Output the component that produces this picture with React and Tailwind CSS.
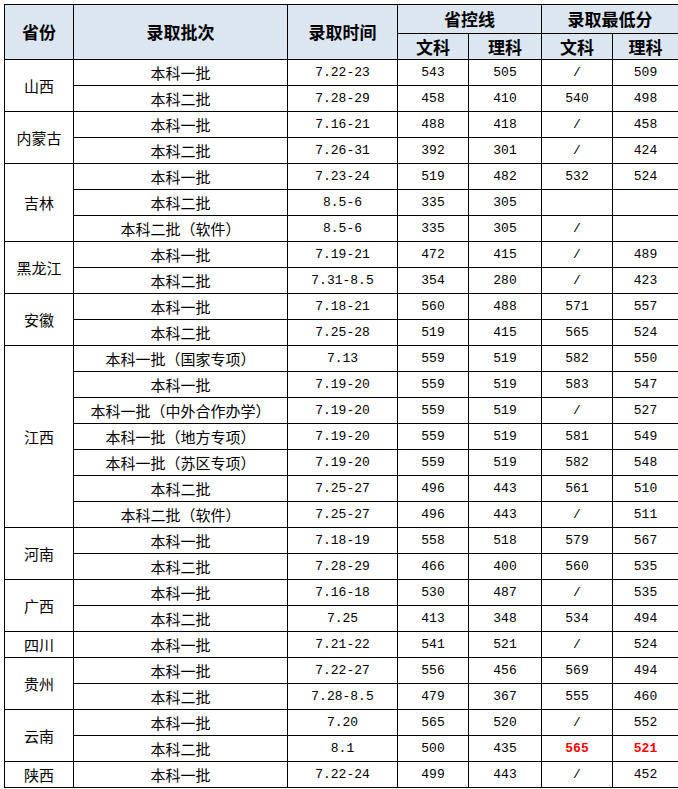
import React from 'react';

const groups = [
    { prov: '山西', rows: [['本科一批', '7.22-23', '543', '505', '/', '509'], ['本科二批', '7.28-29', '458', '410', '540', '498']] },
    { prov: '内蒙古', rows: [['本科一批', '7.16-21', '488', '418', '/', '458'], ['本科二批', '7.26-31', '392', '301', '/', '424']] },
    { prov: '吉林', rows: [['本科一批', '7.23-24', '519', '482', '532', '524'], ['本科二批', '8.5-6', '335', '305', '', ''], ['本科二批（软件）', '8.5-6', '335', '305', '/', '']] },
    { prov: '黑龙江', rows: [['本科一批', '7.19-21', '472', '415', '/', '489'], ['本科二批', '7.31-8.5', '354', '280', '/', '423']] },
    { prov: '安徽', rows: [['本科一批', '7.18-21', '560', '488', '571', '557'], ['本科二批', '7.25-28', '519', '415', '565', '524']] },
    {
        prov: '江西', rows: [
            ['本科一批（国家专项）', '7.13', '559', '519', '582', '550'],
            ['本科一批', '7.19-20', '559', '519', '583', '547'],
            ['本科一批（中外合作办学）', '7.19-20', '559', '519', '/', '527'],
            ['本科一批（地方专项）', '7.19-20', '559', '519', '581', '549'],
            ['本科一批（苏区专项）', '7.19-20', '559', '519', '582', '548'],
            ['本科二批', '7.25-27', '496', '443', '561', '510'],
            ['本科二批（软件）', '7.25-27', '496', '443', '/', '511'],
        ]
    },
    { prov: '河南', rows: [['本科一批', '7.18-19', '558', '518', '579', '567'], ['本科二批', '7.28-29', '466', '400', '560', '535']] },
    { prov: '广西', rows: [['本科一批', '7.16-18', '530', '487', '/', '535'], ['本科二批', '7.25', '413', '348', '534', '494']] },
    { prov: '四川', rows: [['本科一批', '7.21-22', '541', '521', '/', '524']] },
    { prov: '贵州', rows: [['本科一批', '7.22-27', '556', '456', '569', '494'], ['本科二批', '7.28-8.5', '479', '367', '555', '460']] },
    { prov: '云南', rows: [['本科一批', '7.20', '565', '520', '/', '552'], ['本科二批', '8.1', '500', '435', '565', '521', true]] },
    { prov: '陕西', rows: [['本科一批', '7.22-24', '499', '443', '/', '452']] },
];

const cn = { fontFamily: '"Noto Sans CJK SC", "Noto Sans", sans-serif' };
const num = { fontFamily: '"Liberation Mono", "Noto Sans CJK SC", monospace' };

const th = "border border-black bg-[#dce6f1] font-bold text-[17px] leading-[20px] text-center p-0";
const td = "border border-black text-center p-0 h-[26px] leading-[20px]";

export default function App() {
    return (
        <div className="bg-white w-[678px] h-[789px] overflow-hidden pt-[4px] pl-[4px] text-black">
            <table className="border-collapse table-fixed w-[674px]" style={cn}>
                <colgroup>
                    <col className="w-[69px]" />
                    <col className="w-[214px]" />
                    <col className="w-[110px]" />
                    <col className="w-[71px]" />
                    <col className="w-[73px]" />
                    <col className="w-[71px]" />
                    <col className="w-[66px]" />
                </colgroup>
                <thead>
                    <tr className="h-[29px]">
                        <th rowSpan={2} className={th}>省份</th>
                        <th rowSpan={2} className={th}>录取批次</th>
                        <th rowSpan={2} className={th}>录取时间</th>
                        <th colSpan={2} className={th}>省控线</th>
                        <th colSpan={2} className={th}>录取最低分</th>
                    </tr>
                    <tr className="h-[26px]">
                        <th className={th}>文科</th>
                        <th className={th}>理科</th>
                        <th className={th}>文科</th>
                        <th className={th}>理科</th>
                    </tr>
                </thead>
                <tbody>
                    {groups.map((g) => g.rows.map((r, i) => (
                        <tr key={g.prov + i} className="h-[26px]">
                            {i === 0 && <td rowSpan={g.rows.length} className={`${td} text-[15px]`}>{g.prov}</td>}
                            <td className={`${td} text-[15px]`}>{r[0]}</td>
                            {r.slice(1, 6).map((v, j) => (
                                <td key={j} style={num}
                                    className={`${td} text-[13px] ${r[6] && j >= 3 ? 'text-[#ff0000] font-bold' : ''}`}>
                                    {v}
                                </td>
                            ))}
                        </tr>
                    )))}
                </tbody>
            </table>
        </div>
    );
}
